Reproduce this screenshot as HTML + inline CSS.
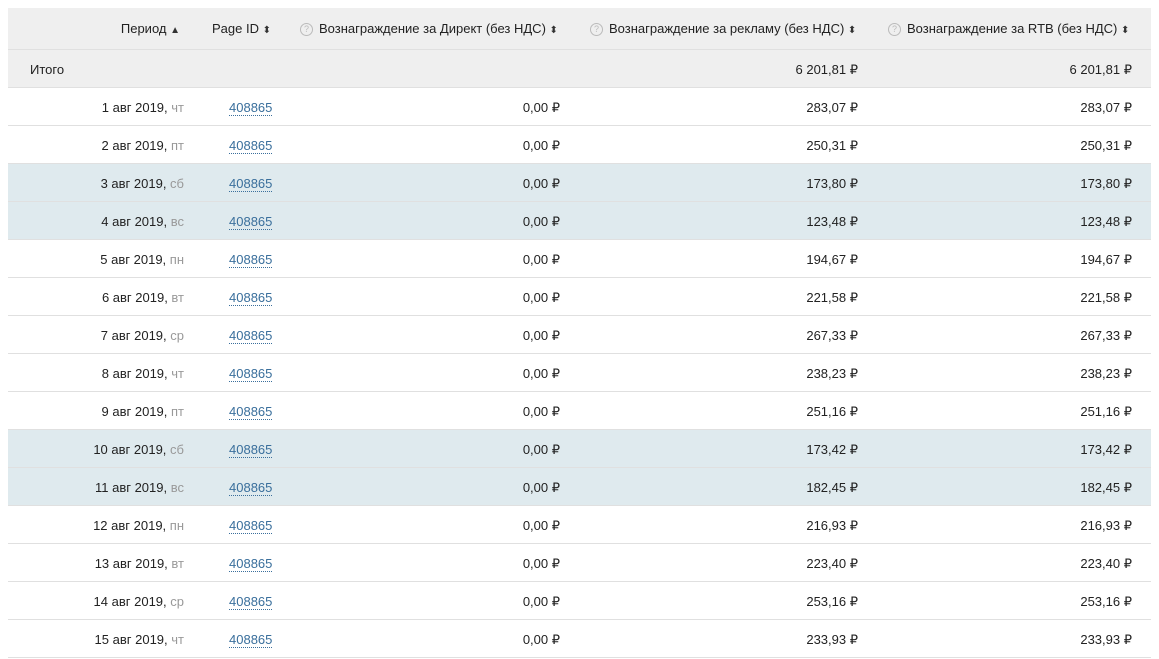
<!DOCTYPE html>
<html><head><meta charset="utf-8"><style>
body{margin:0;width:1159px;height:656px;overflow:hidden;background:#fff;font-family:"Liberation Sans",Arial,sans-serif;font-size:13px;color:#222;position:relative}
.r{position:absolute;left:8px;width:1143px;height:38px;border-bottom:1px solid #e0e0e0;box-sizing:border-box}
.h{background:#efefef}
.w{background:#dfeaee}
.c{position:absolute;top:1px;line-height:38px;white-space:nowrap}
.rt{text-align:right}
.g{color:#999}
a{color:#3a6f9c;text-decoration:none;border-bottom:1px dotted #3a6f9c;line-height:14px;display:inline-block}
.q{display:inline-block;width:11px;height:11px;border:1px solid #bbb;border-radius:50%;color:#bbb;font-size:9px;line-height:11px;text-align:center;margin-right:6px;vertical-align:1px}
.s{font-size:10px;color:#333}
</style></head><body>
<div class="r h" style="top:8px;height:42px">
 <div class="c rt" style="right:971px;line-height:41px;top:0">Период <span class="s">▲</span></div>
 <div class="c" style="left:204px;line-height:41px;top:0">Page ID <span class="s">⬍</span></div>
 <div class="c" style="left:292px;line-height:41px;top:0"><span class="q">?</span>Вознаграждение за Директ (без НДС) <span class="s">⬍</span></div>
 <div class="c" style="left:582px;line-height:41px;top:0"><span class="q">?</span>Вознаграждение за рекламу (без НДС) <span class="s">⬍</span></div>
 <div class="c" style="left:880px;line-height:41px;top:0"><span class="q">?</span>Вознаграждение за RTB (без НДС) <span class="s">⬍</span></div>
</div>
<div class="r h" style="top:50px">
 <div class="c" style="left:22px">Итого</div>
 <div class="c" style="right:293px">6 201,81 ₽</div>
 <div class="c" style="right:19px">6 201,81 ₽</div>
</div>
<div id="rows"></div>
<script>
var d=[["1","чт","283,07"],["2","пт","250,31"],["3","сб","173,80"],["4","вс","123,48"],["5","пн","194,67"],["6","вт","221,58"],["7","ср","267,33"],["8","чт","238,23"],["9","пт","251,16"],["10","сб","173,42"],["11","вс","182,45"],["12","пн","216,93"],["13","вт","223,40"],["14","ср","253,16"],["15","чт","233,93"]];
var h="";d.forEach(function(x,i){var w=(x[1]=="сб"||x[1]=="вс")?" w":"";
h+='<div class="r'+w+'" style="top:'+(88+38*i)+'px"><div class="c" style="right:967px">'+x[0]+' авг 2019, <span class="g">'+x[1]+'</span></div><div class="c" style="left:221px"><a>408865</a></div><div class="c" style="right:591px">0,00 ₽</div><div class="c" style="right:293px">'+x[2]+' ₽</div><div class="c" style="right:19px">'+x[2]+' ₽</div></div>';});
document.getElementById("rows").innerHTML=h;
</script>
</body></html>
